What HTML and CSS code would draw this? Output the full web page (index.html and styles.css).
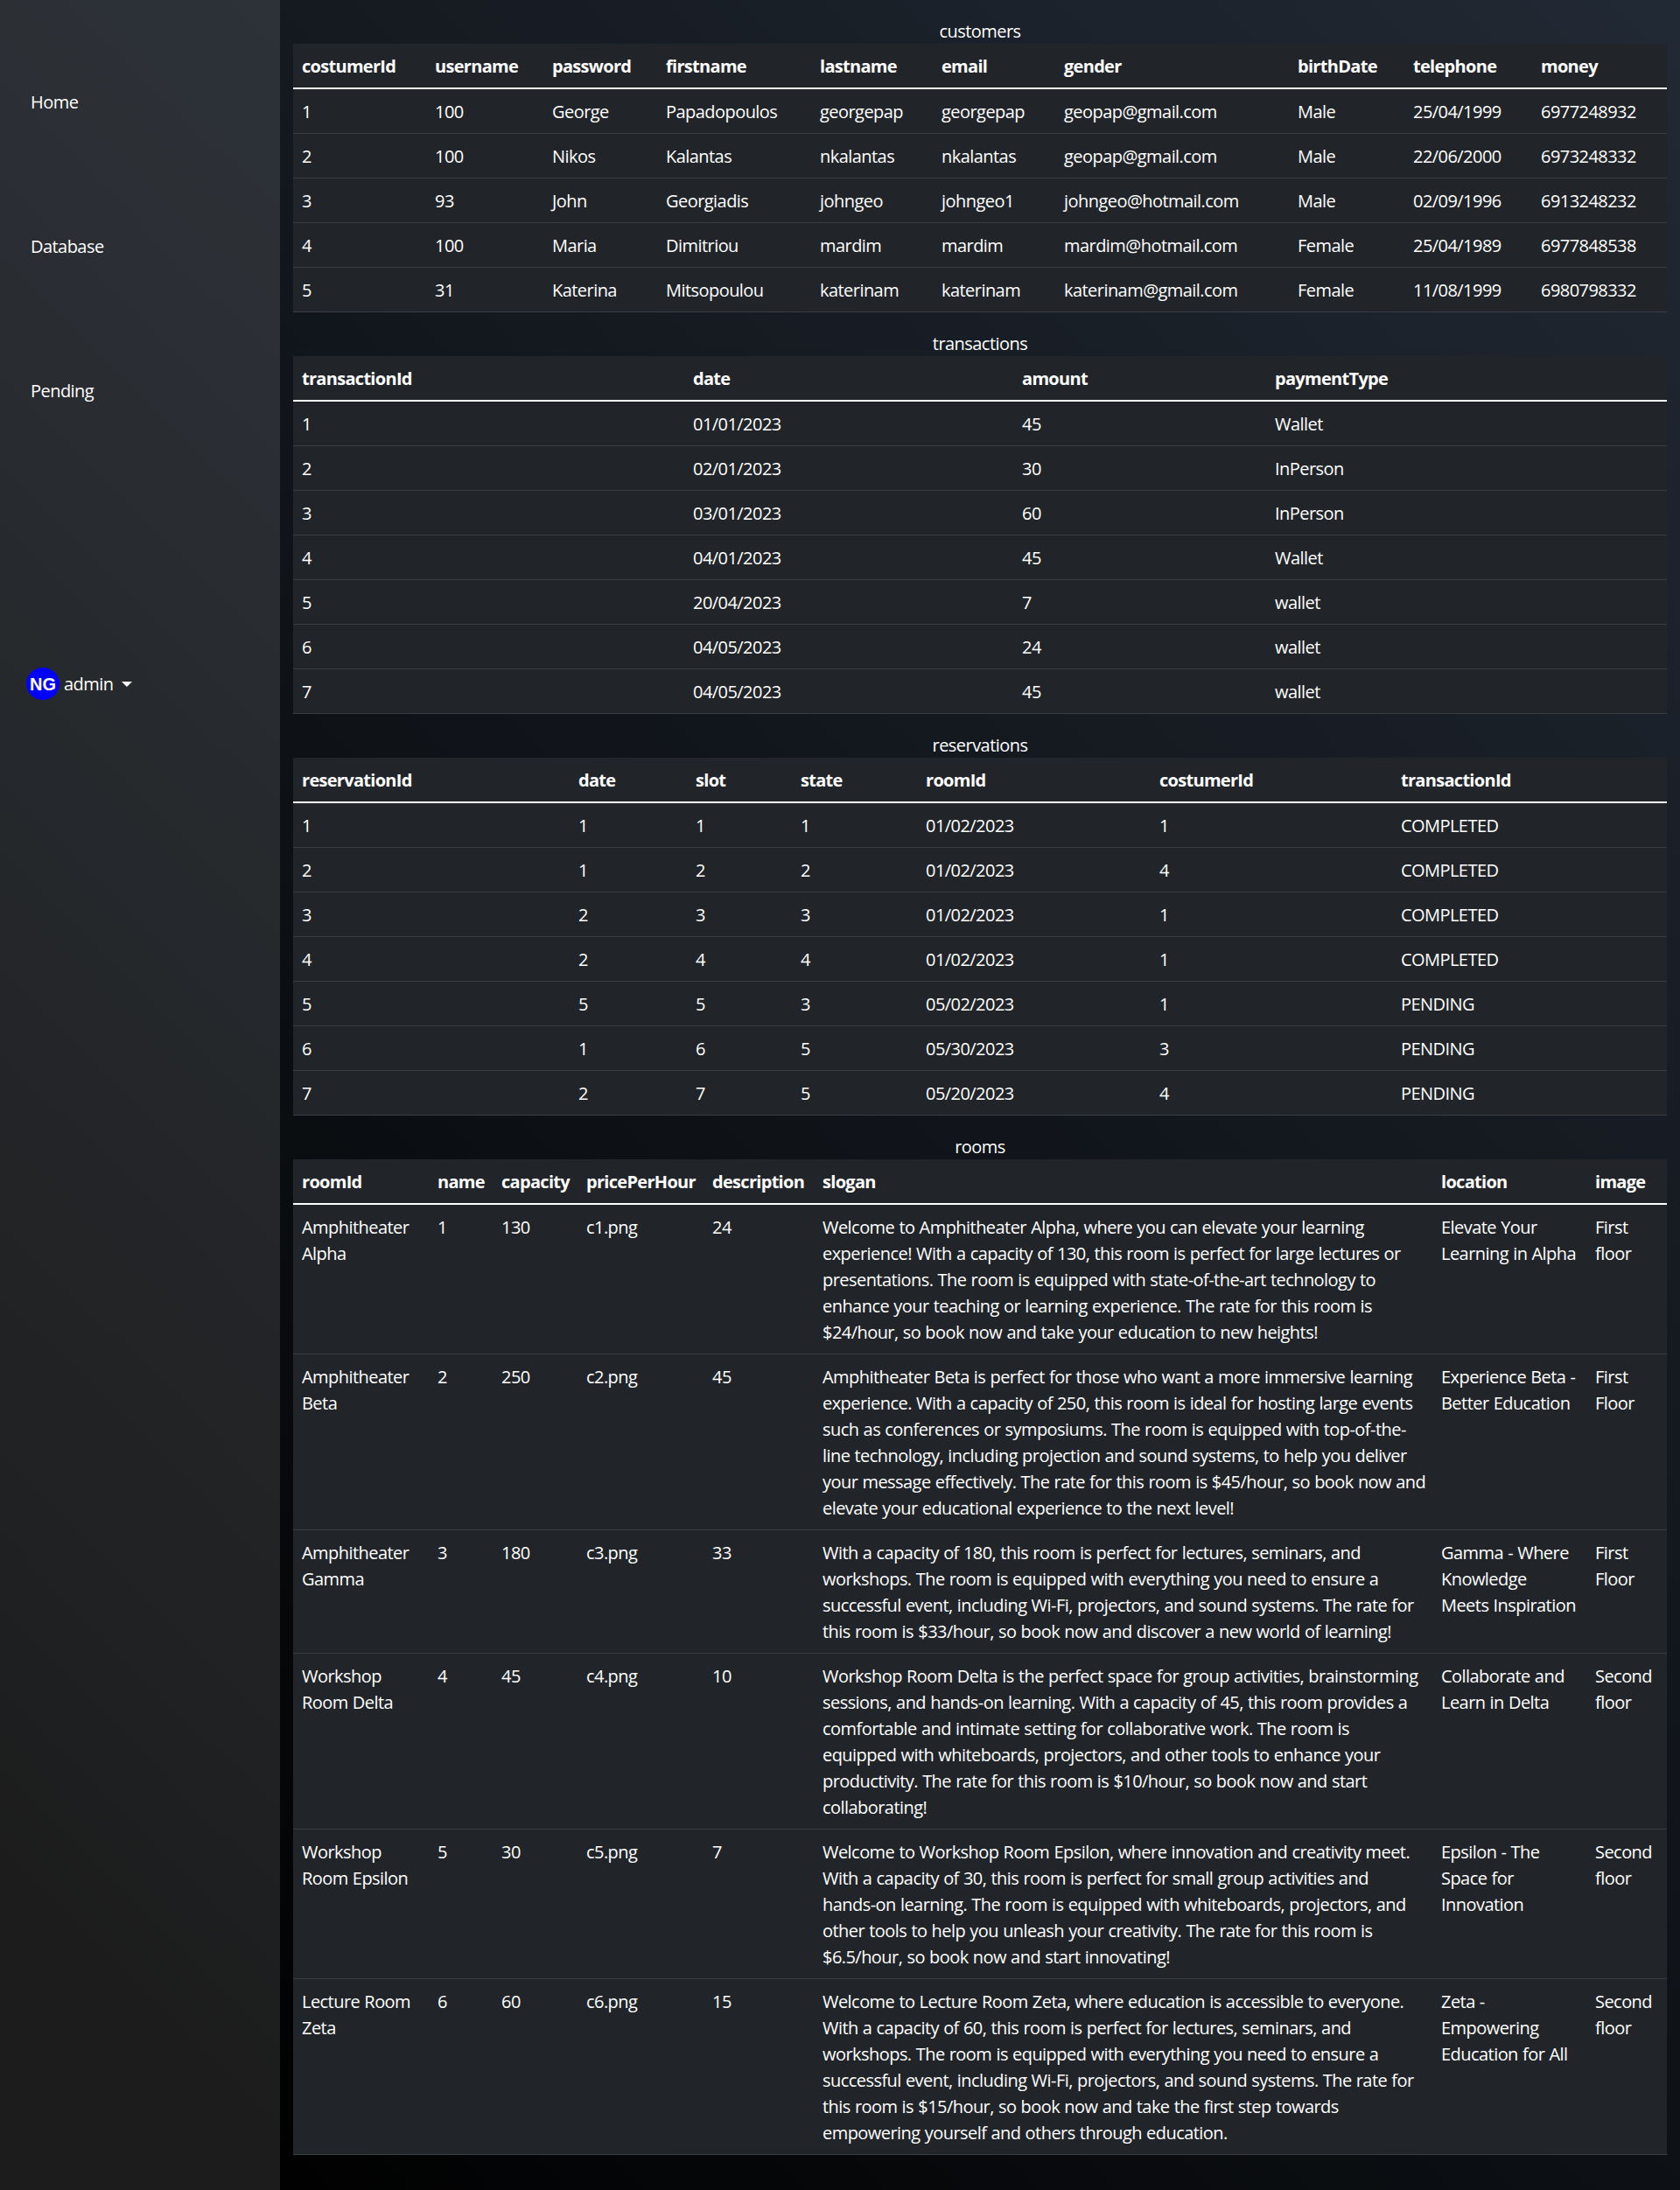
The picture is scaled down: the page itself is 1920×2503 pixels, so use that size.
FILE: index.html
```html
<!DOCTYPE html>
<html lang="en">
<head>
    <meta charset="UTF-8">
    <title>Admin - Database</title>
    <link rel="stylesheet" href="styles.css">
</head>
<body>
    <div class="layout">
        <aside class="sidebar">
            <ul class="side-nav">
                <li><a href="#">Home</a></li>
                <li><a href="#">Database</a></li>
                <li><a href="#">Pending</a></li>
            </ul>
            <div class="profile">
                <span class="avatar">NG</span>
                <span class="profile-name">admin</span>
                <span class="caret"></span>
            </div>
        </aside>
        <main class="content">
            <table class="db-table customers">
                <caption>customers</caption>
                <colgroup><col class="c1"><col class="c2"><col class="c3"><col class="c4"><col class="c5"><col class="c6"><col class="c7"><col class="c8"><col class="c9"><col class="c10"></colgroup>
                <thead><tr><th>costumerId</th><th>username</th><th>password</th><th>firstname</th><th>lastname</th><th>email</th><th>gender</th><th>birthDate</th><th>telephone</th><th>money</th></tr></thead>
                <tbody>
                    <tr><td>1</td><td>100</td><td>George</td><td>Papadopoulos</td><td>georgepap</td><td>georgepap</td><td>geopap@gmail.com</td><td>Male</td><td>25/04/1999</td><td>6977248932</td></tr>
                    <tr><td>2</td><td>100</td><td>Nikos</td><td>Kalantas</td><td>nkalantas</td><td>nkalantas</td><td>geopap@gmail.com</td><td>Male</td><td>22/06/2000</td><td>6973248332</td></tr>
                    <tr><td>3</td><td>93</td><td>John</td><td>Georgiadis</td><td>johngeo</td><td>johngeo1</td><td>johngeo@hotmail.com</td><td>Male</td><td>02/09/1996</td><td>6913248232</td></tr>
                    <tr><td>4</td><td>100</td><td>Maria</td><td>Dimitriou</td><td>mardim</td><td>mardim</td><td>mardim@hotmail.com</td><td>Female</td><td>25/04/1989</td><td>6977848538</td></tr>
                    <tr><td>5</td><td>31</td><td>Katerina</td><td>Mitsopoulou</td><td>katerinam</td><td>katerinam</td><td>katerinam@gmail.com</td><td>Female</td><td>11/08/1999</td><td>6980798332</td></tr>
                </tbody>
            </table>
            <table class="db-table transactions">
                <caption>transactions</caption>
                <colgroup><col class="c1"><col class="c2"><col class="c3"><col class="c4"></colgroup>
                <thead><tr><th>transactionId</th><th>date</th><th>amount</th><th>paymentType</th></tr></thead>
                <tbody>
                    <tr><td>1</td><td>01/01/2023</td><td>45</td><td>Wallet</td></tr>
                    <tr><td>2</td><td>02/01/2023</td><td>30</td><td>InPerson</td></tr>
                    <tr><td>3</td><td>03/01/2023</td><td>60</td><td>InPerson</td></tr>
                    <tr><td>4</td><td>04/01/2023</td><td>45</td><td>Wallet</td></tr>
                    <tr><td>5</td><td>20/04/2023</td><td>7</td><td>wallet</td></tr>
                    <tr><td>6</td><td>04/05/2023</td><td>24</td><td>wallet</td></tr>
                    <tr><td>7</td><td>04/05/2023</td><td>45</td><td>wallet</td></tr>
                </tbody>
            </table>
            <table class="db-table reservations">
                <caption>reservations</caption>
                <colgroup><col class="c1"><col class="c2"><col class="c3"><col class="c4"><col class="c5"><col class="c6"><col class="c7"></colgroup>
                <thead><tr><th>reservationId</th><th>date</th><th>slot</th><th>state</th><th>roomId</th><th>costumerId</th><th>transactionId</th></tr></thead>
                <tbody>
                    <tr><td>1</td><td>1</td><td>1</td><td>1</td><td>01/02/2023</td><td>1</td><td>COMPLETED</td></tr>
                    <tr><td>2</td><td>1</td><td>2</td><td>2</td><td>01/02/2023</td><td>4</td><td>COMPLETED</td></tr>
                    <tr><td>3</td><td>2</td><td>3</td><td>3</td><td>01/02/2023</td><td>1</td><td>COMPLETED</td></tr>
                    <tr><td>4</td><td>2</td><td>4</td><td>4</td><td>01/02/2023</td><td>1</td><td>COMPLETED</td></tr>
                    <tr><td>5</td><td>5</td><td>5</td><td>3</td><td>05/02/2023</td><td>1</td><td>PENDING</td></tr>
                    <tr><td>6</td><td>1</td><td>6</td><td>5</td><td>05/30/2023</td><td>3</td><td>PENDING</td></tr>
                    <tr><td>7</td><td>2</td><td>7</td><td>5</td><td>05/20/2023</td><td>4</td><td>PENDING</td></tr>
                </tbody>
            </table>
            <table class="db-table rooms">
                <caption>rooms</caption>
                <colgroup><col class="c1"><col class="c2"><col class="c3"><col class="c4"><col class="c5"><col class="c6"><col class="c7"><col class="c8"></colgroup>
                <thead><tr><th>roomId</th><th>name</th><th>capacity</th><th>pricePerHour</th><th>description</th><th>slogan</th><th>location</th><th>image</th></tr></thead>
                <tbody>
                    <tr><td>Amphitheater Alpha</td><td>1</td><td>130</td><td>c1.png</td><td>24</td><td class="slogan">Welcome to Amphitheater Alpha, where you can elevate your learning<br>experience! With a capacity of 130, this room is perfect for large lectures or<br>presentations. The room is equipped with state-of-the-art technology to<br>enhance your teaching or learning experience. The rate for this room is<br>$24/hour, so book now and take your education to new heights!</td><td>Elevate Your Learning in Alpha</td><td>First floor</td></tr>
                    <tr><td>Amphitheater Beta</td><td>2</td><td>250</td><td>c2.png</td><td>45</td><td class="slogan">Amphitheater Beta is perfect for those who want a more immersive learning<br>experience. With a capacity of 250, this room is ideal for hosting large events<br>such as conferences or symposiums. The room is equipped with top-of-the-<br>line technology, including projection and sound systems, to help you deliver<br>your message effectively. The rate for this room is $45/hour, so book now and<br>elevate your educational experience to the next level!</td><td>Experience Beta - Better Education</td><td>First Floor</td></tr>
                    <tr><td>Amphitheater Gamma</td><td>3</td><td>180</td><td>c3.png</td><td>33</td><td class="slogan">With a capacity of 180, this room is perfect for lectures, seminars, and<br>workshops. The room is equipped with everything you need to ensure a<br>successful event, including Wi-Fi, projectors, and sound systems. The rate for<br>this room is $33/hour, so book now and discover a new world of learning!</td><td>Gamma - Where<br>Knowledge<br>Meets Inspiration</td><td>First Floor</td></tr>
                    <tr><td>Workshop Room Delta</td><td>4</td><td>45</td><td>c4.png</td><td>10</td><td class="slogan">Workshop Room Delta is the perfect space for group activities, brainstorming<br>sessions, and hands-on learning. With a capacity of 45, this room provides a<br>comfortable and intimate setting for collaborative work. The room is<br>equipped with whiteboards, projectors, and other tools to enhance your<br>productivity. The rate for this room is $10/hour, so book now and start<br>collaborating!</td><td>Collaborate and Learn in Delta</td><td>Second floor</td></tr>
                    <tr><td>Workshop Room Epsilon</td><td>5</td><td>30</td><td>c5.png</td><td>7</td><td class="slogan">Welcome to Workshop Room Epsilon, where innovation and creativity meet.<br>With a capacity of 30, this room is perfect for small group activities and<br>hands-on learning. The room is equipped with whiteboards, projectors, and<br>other tools to help you unleash your creativity. The rate for this room is<br>$6.5/hour, so book now and start innovating!</td><td>Epsilon - The Space for Innovation</td><td>Second floor</td></tr>
                    <tr><td>Lecture Room Zeta</td><td>6</td><td>60</td><td>c6.png</td><td>15</td><td class="slogan">Welcome to Lecture Room Zeta, where education is accessible to everyone.<br>With a capacity of 60, this room is perfect for lectures, seminars, and<br>workshops. The room is equipped with everything you need to ensure a<br>successful event, including Wi-Fi, projectors, and sound systems. The rate for<br>this room is $15/hour, so book now and take the first step towards<br>empowering yourself and others through education.</td><td>Zeta - Empowering Education for All</td><td>Second floor</td></tr>
                </tbody>
            </table>
        </main>
    </div>
</body>
</html>
```

FILE: styles.css
```css
* {
    box-sizing: border-box;
}
html, body {
    height: 100%;
}
body {
    margin: 0;
    font-family: "Open Sans", "Noto Sans", Arial, sans-serif;
    font-size: 20px;
    line-height: 30px;
    letter-spacing: -0.55px;
    word-spacing: 0.5px;
    color: #fff;
    background: linear-gradient(225deg, #212934 0%, #000 95%);
}
.layout {
    display: flex;
    min-height: 100%;
}
.sidebar {
    width: 320px;
    flex-shrink: 0;
    padding: 102px 0 0 30px;
    background: rgba(255, 255, 255, 0.11);
}
.side-nav {
    list-style: none;
    margin: 0;
    padding: 0 0 0 5px;
}
.side-nav li {
    margin-bottom: 135px;
}
.side-nav li:last-child {
    margin-bottom: 0;
}
.side-nav a {
    color: #fff;
    text-decoration: none;
}
.profile {
    display: flex;
    align-items: center;
    margin-top: 301px;
}
.avatar {
    width: 38px;
    height: 37px;
    border-radius: 50%;
    background: #00f;
    font-family: "Liberation Sans", Arial, sans-serif;
    font-size: 20px;
    letter-spacing: 0;
    font-weight: 700;
    line-height: 39px;
    text-align: center;
    margin-right: 5px;
}
.caret {
    width: 0;
    height: 0;
    margin-left: 10px;
    border-top: 6px solid #fff;
    border-left: 6px solid transparent;
    border-right: 6px solid transparent;
}
.content {
    flex: 1;
    min-width: 0;
    padding: 0 15px 40px;
}
.db-table {
    width: 1570px;
    table-layout: fixed;
    border-collapse: collapse;
    background: #212529;
}
.db-table caption {
    caption-side: top;
    padding: 21px 0 0;
    line-height: 29px;
}
.db-table th, .db-table td {
    padding: 11px 10px 9px;
    text-align: left;
    vertical-align: top;
}
.db-table th {
    font-weight: 700;
    letter-spacing: -0.7px;
    white-space: nowrap;
    border-bottom: 2px solid #fff;
}
.db-table td {
    border-bottom: 1px solid #3a3e43;
}
.db-table .slogan {
    white-space: nowrap;
}

.customers .c1 { width: 152px; }
.customers .c2 { width: 134px; }
.customers .c3 { width: 130px; }
.customers .c4 { width: 176px; }
.customers .c5 { width: 139px; }
.customers .c6 { width: 140px; }
.customers .c7 { width: 267px; }
.customers .c8 { width: 132px; }
.customers .c9 { width: 146px; }
.customers .c10 { width: 154px; }

.transactions .c1 { width: 447px; }
.transactions .c2 { width: 376px; }
.transactions .c3 { width: 289px; }
.transactions .c4 { width: 458px; }

.reservations .c1 { width: 316px; }
.reservations .c2 { width: 134px; }
.reservations .c3 { width: 120px; }
.reservations .c4 { width: 143px; }
.reservations .c5 { width: 267px; }
.reservations .c6 { width: 276px; }
.reservations .c7 { width: 314px; }

.rooms .c1 { width: 155px; }
.rooms .c2 { width: 73px; }
.rooms .c3 { width: 97px; }
.rooms .c4 { width: 144px; }
.rooms .c5 { width: 126px; }
.rooms .c6 { width: 707px; }
.rooms .c7 { width: 176px; }
.rooms .c8 { width: 92px; }
```
